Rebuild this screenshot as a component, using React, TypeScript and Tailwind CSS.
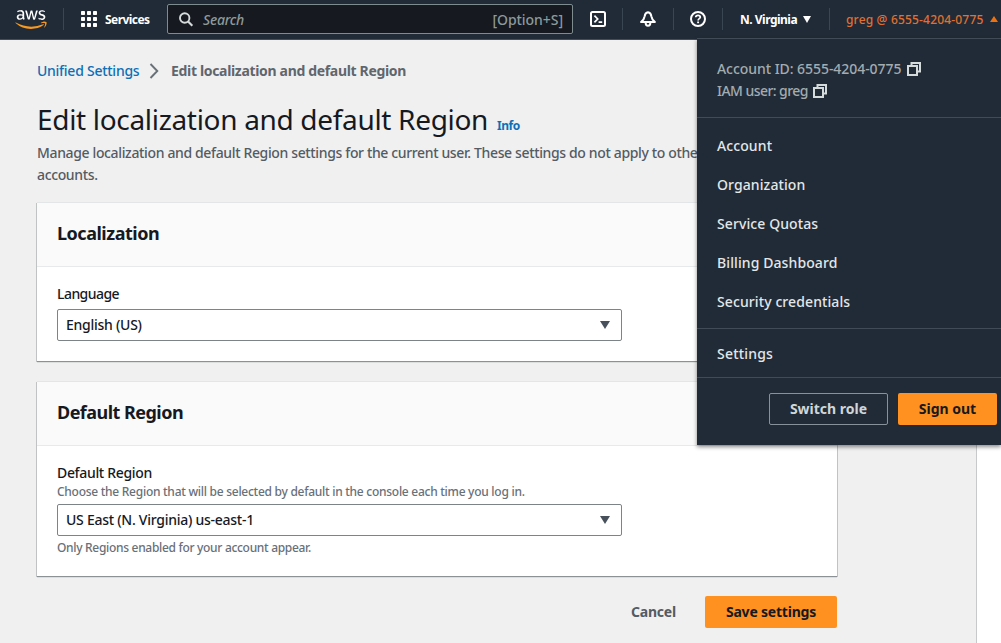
import type { ReactNode } from "react";
import { FaAws } from "react-icons/fa";

function Divider({ className }: { className: string }) {
  return <div className={`h-[22px] w-px shrink-0 bg-[#3b4653] ${className}`} />;
}

function AwsLogo() {
  return (
    <div className="ml-[15px] flex h-[25px] w-[32px] shrink-0 items-center">
      <svg width="0" height="0" className="absolute">
        <defs>
          <linearGradient id="aws-fill" x1="0" y1="0" x2="0" y2="1">
            <stop offset="0.62" stopColor="#ffffff" />
            <stop offset="0.62" stopColor="#f7981f" />
          </linearGradient>
        </defs>
      </svg>
      <FaAws className="h-[25px] w-[32px] [&_path]:fill-[url(#aws-fill)]" />
    </div>
  );
}

function GridIcon() {
  const cells = [0, 6, 12];
  return (
    <svg width="16" height="16" viewBox="0 0 16 16" fill="#ffffff">
      {cells.map((y) => cells.map((x) => <rect key={`${x}-${y}`} x={x} y={y} width="4" height="4" rx="0.7" />))}
    </svg>
  );
}

function SearchIcon() {
  return (
    <svg width="15" height="15" viewBox="0 0 15 15" fill="none" stroke="#d5dbdb" strokeWidth="1.9">
      <circle cx="5.7" cy="6" r="4.7" />
      <path d="M9.1 9.5 13.300 13.800" strokeWidth="2.1" />
    </svg>
  );
}

function TerminalIcon() {
  return (
    <svg width="16" height="16" viewBox="0 0 16 16" fill="none" stroke="#ffffff" strokeWidth="2">
      <rect x="1" y="1" width="14" height="14" rx="1.5" />
      <path d="M4.4 4.6 7.7 8l-3.3 3.4M8.6 11.2h3.6" strokeWidth="1.7" />
    </svg>
  );
}

function BellIcon() {
  return (
    <svg width="16" height="16" viewBox="0 0 16 16" fill="none" stroke="#ffffff" strokeWidth="2" strokeLinejoin="round">
      <path d="M8 1.2C5.900 1.400 4.900 3 4.700 5.200 4.400 7.600 3.200 9.200 1.100 11h13.800c-2.100-1.800-3.300-3.400-3.600-5.800C11.100 3 10.100 1.400 8 1.200Z" />
      <path d="M5.600 11.500c0 2 .9 3.200 2.400 3.200s2.400-1.200 2.400-3.200" />
    </svg>
  );
}

function HelpIcon() {
  return (
    <svg width="16" height="16" viewBox="0 0 16 16" fill="none" stroke="#ffffff" strokeWidth="2">
      <circle cx="8" cy="8" r="7" />
      <path d="M5.700 6.300C5.800 5 6.700 4.300 8 4.300s2.300.8 2.300 1.900c0 1.400-2.200 1.500-2.200 3.200" strokeWidth="1.700" />
      <path d="M8.100 10.500v1.700" strokeWidth="1.900" />
    </svg>
  );
}

function CopyIcon() {
  return (
    <svg width="14" height="14" viewBox="0 0 14 14" fill="none" stroke="#d5dbdb" strokeWidth="2">
      <path d="M1 4h9v9H1zM4.500 4V1H13v8.500h-3" />
    </svg>
  );
}

function Caret({ className, up = false }: { className: string; up?: boolean }) {
  return (
    <svg className={className} viewBox="0 0 10 8" preserveAspectRatio="none" fill="currentColor">
      <path d={up ? "M0 8 5 0l5 8Z" : "M0 0h10L5 8Z"} />
    </svg>
  );
}

function Card({ title, titleClass, children }: { title: string; titleClass: string; children: ReactNode }) {
  return (
    <section className="w-[800px] border-t border-[#e3e6e6] bg-white shadow-[0_1px_0_0_#8b9194,0_2px_0_0_#dcdede,1px_1px_0_0_#bfc3c4,-1px_1px_0_0_#bfc3c4]">
      <header className="h-[64px] border-b border-[#e7eaea] bg-[#fafafa] px-5 pt-[19px]">
        <h2 className={`text-[18px] leading-[22px] font-bold text-[#16191f] ${titleClass}`}>{title}</h2>
      </header>
      <div className="px-5 pt-4">{children}</div>
    </section>
  );
}

function SelectBox({ value, textClass }: { value: string; textClass: string }) {
  return (
    <div className="flex h-8 w-[565px] items-center justify-between rounded-[2px] border border-[#7d8487] bg-white pr-[11px] pl-2 text-[#16191f]">
      <span className={textClass}>{value}</span>
      <Caret className="h-2 w-[10px] text-[#48505c]" />
    </div>
  );
}

function Header() {
  return (
    <header className="flex h-10 items-start border-b border-[#454d59] bg-[#212b37] text-[12px] font-bold text-white">
      <div className="flex h-[38px] w-full items-center">
        <AwsLogo />
        <Divider className="ml-[16px]" />
        <div className="ml-[17px] flex items-center gap-2">
          <GridIcon />
          <span className="w-[45px] pt-px tracking-[-0.550px] whitespace-nowrap">Services</span>
        </div>
        <div className="ml-[17px] flex h-[30px] w-[406px] items-center rounded-[2px] border border-[#7f8c8f] bg-[#16191f] pr-[9px] pl-[11px] text-[14px] font-medium text-[#8d999b]">
          <SearchIcon />
          <span className="ml-[9px] flex-1 pt-0.5 tracking-[-0.250px] italic">Search</span>
          <span className="pt-0.5 tracking-[-0.050px]">[Option+S]</span>
        </div>
        <div className="ml-[17px] flex items-center">
          <TerminalIcon />
          <Divider className="ml-4" />
          <div className="ml-[17px]"><BellIcon /></div>
          <Divider className="ml-[17px]" />
          <div className="ml-4"><HelpIcon /></div>
          <Divider className="ml-4" />
        </div>
        <span className="ml-[17px] w-[57px] pt-px tracking-[-0.500px] whitespace-nowrap">N. Virginia</span>
        <Caret className="ml-[6px] h-[7px] w-[8px] text-white" />
        <Divider className="ml-[18px]" />
        <span className="ml-4 w-[138px] pt-0.5 font-medium tracking-[0.180px] whitespace-nowrap text-[#e0702f]">greg @ 6555-4204-0775</span>
        <Caret up className="ml-[6px] h-[6px] w-[8px] text-[#ec7211]" />
      </div>
    </header>
  );
}

function AccountMenu() {
  const items = ["Account", "Organization", "Service Quotas", "Billing Dashboard", "Security credentials"];
  return (
    <div className="absolute top-[38px] left-[697px] h-[407px] w-[304px] border-t border-[#414a57] bg-[#212b37] shadow-[0_2px_4px_0_rgba(0,0,0,0.450)]">
      <div className="h-[79px] border-b border-[#414a57] px-5 pt-[19px] leading-[22px] font-medium text-[#a3acaf]">
        <div className="flex items-center">
          <span className="w-[190px] tracking-[-0.050px] whitespace-nowrap">Account ID: 6555-4204-0775</span>
          <CopyIcon />
        </div>
        <div className="flex items-center">
          <span className="w-[96px] tracking-[-0.550px] whitespace-nowrap">IAM user: greg</span>
          <CopyIcon />
        </div>
      </div>
      <div className="h-[211px] border-b border-[#414a57] px-5 pt-[9px] font-medium tracking-[0.100px] text-[#e3e7e8]">
        {items.map((item) => (
          <div key={item} className="h-[39px] leading-[38px]">{item}</div>
        ))}
      </div>
      <div className="h-[49px] border-b border-[#414a57] px-5 leading-[50px] font-medium tracking-[0.200px] text-[#e3e7e8]">Settings</div>
      <div className="flex justify-end gap-[10px] pt-[15px] pr-1 font-bold">
        <button className="h-8 w-[119px] rounded-[2px] border border-[#87919a] text-[#d0d6d7]">Switch role</button>
        <button className="h-8 w-[99px] rounded-[2px] bg-[#ff9120] text-[#16191f]">Sign out</button>
      </div>
    </div>
  );
}

export default function App() {
  return (
    <div className="relative flex h-[643px] w-[1001px] flex-col overflow-hidden bg-[#f0f0f0] font-['Noto_Sans',sans-serif] text-[14px] leading-[22px]">
      <Header />
      <div className="flex min-h-0 flex-1">
        <main className="w-[976px] pt-5 pl-[37px] font-medium">
          <nav className="flex h-[22px] items-center">
            <span className="w-[112px] tracking-[-0.260px] text-[#0e6fb5]">Unified Settings</span>
            <svg width="10" height="16" viewBox="0 0 10 16" fill="none" stroke="#687078" strokeWidth="1.900">
              <path d="M1.500 1 8.300 8l-6.800 7" />
            </svg>
            <span className="ml-3 font-bold tracking-[-0.330px] text-[#5f666e]">Edit localization and default Region</span>
          </nav>
          <div className="mt-[19px] flex items-baseline">
            <h1 className="w-[460px] text-[28px] leading-9 font-normal tracking-[-0.320px] whitespace-nowrap text-[#16191f]">Edit localization and default Region</h1>
            <span className="text-[12px] leading-4 font-bold tracking-[-0.450px] text-[#0e6fb5]">Info</span>
          </div>
          <p className="mt-[5px] w-[700px] tracking-[-0.360px] text-[#545b64]">
            Manage localization and default Region settings for the current user. These settings do not apply to other accounts.
          </p>
          <div className="mt-4 flex flex-col gap-5">
            <Card title="Localization" titleClass="tracking-[-0.480px]">
              <div className="mb-1 tracking-[-0.550px] text-[#16191f]">Language</div>
              <SelectBox value="English (US)" textClass="tracking-[-0.260px]" />
              <div className="h-5" />
            </Card>
            <Card title="Default Region" titleClass="tracking-[-0.530px]">
              <div className="tracking-[-0.330px] text-[#16191f]">Default Region</div>
              <div className="mb-1 text-[12px] leading-4 tracking-[-0.270px] text-[#687078]">
                Choose the Region that will be selected by default in the console each time you log in.
              </div>
              <SelectBox value="US East (N. Virginia) us-east-1" textClass="tracking-[-0.260px]" />
              <div className="mt-1 text-[12px] leading-4 tracking-[-0.310px] text-[#687078]">Only Regions enabled for your account appear.</div>
              <div className="h-5" />
            </Card>
          </div>
          <div className="mt-5 flex w-[800px] justify-end font-bold tracking-[-0.200px]">
            <button className="h-8 px-[29px] text-[#545b64]">Cancel</button>
            <button className="h-8 w-[132px] rounded-[2px] bg-[#ff9120] text-[#16191f]">Save settings</button>
          </div>
        </main>
        <aside className="w-[25px] border-l border-[#c6cacb] bg-white" />
      </div>
      <AccountMenu />
    </div>
  );
}
